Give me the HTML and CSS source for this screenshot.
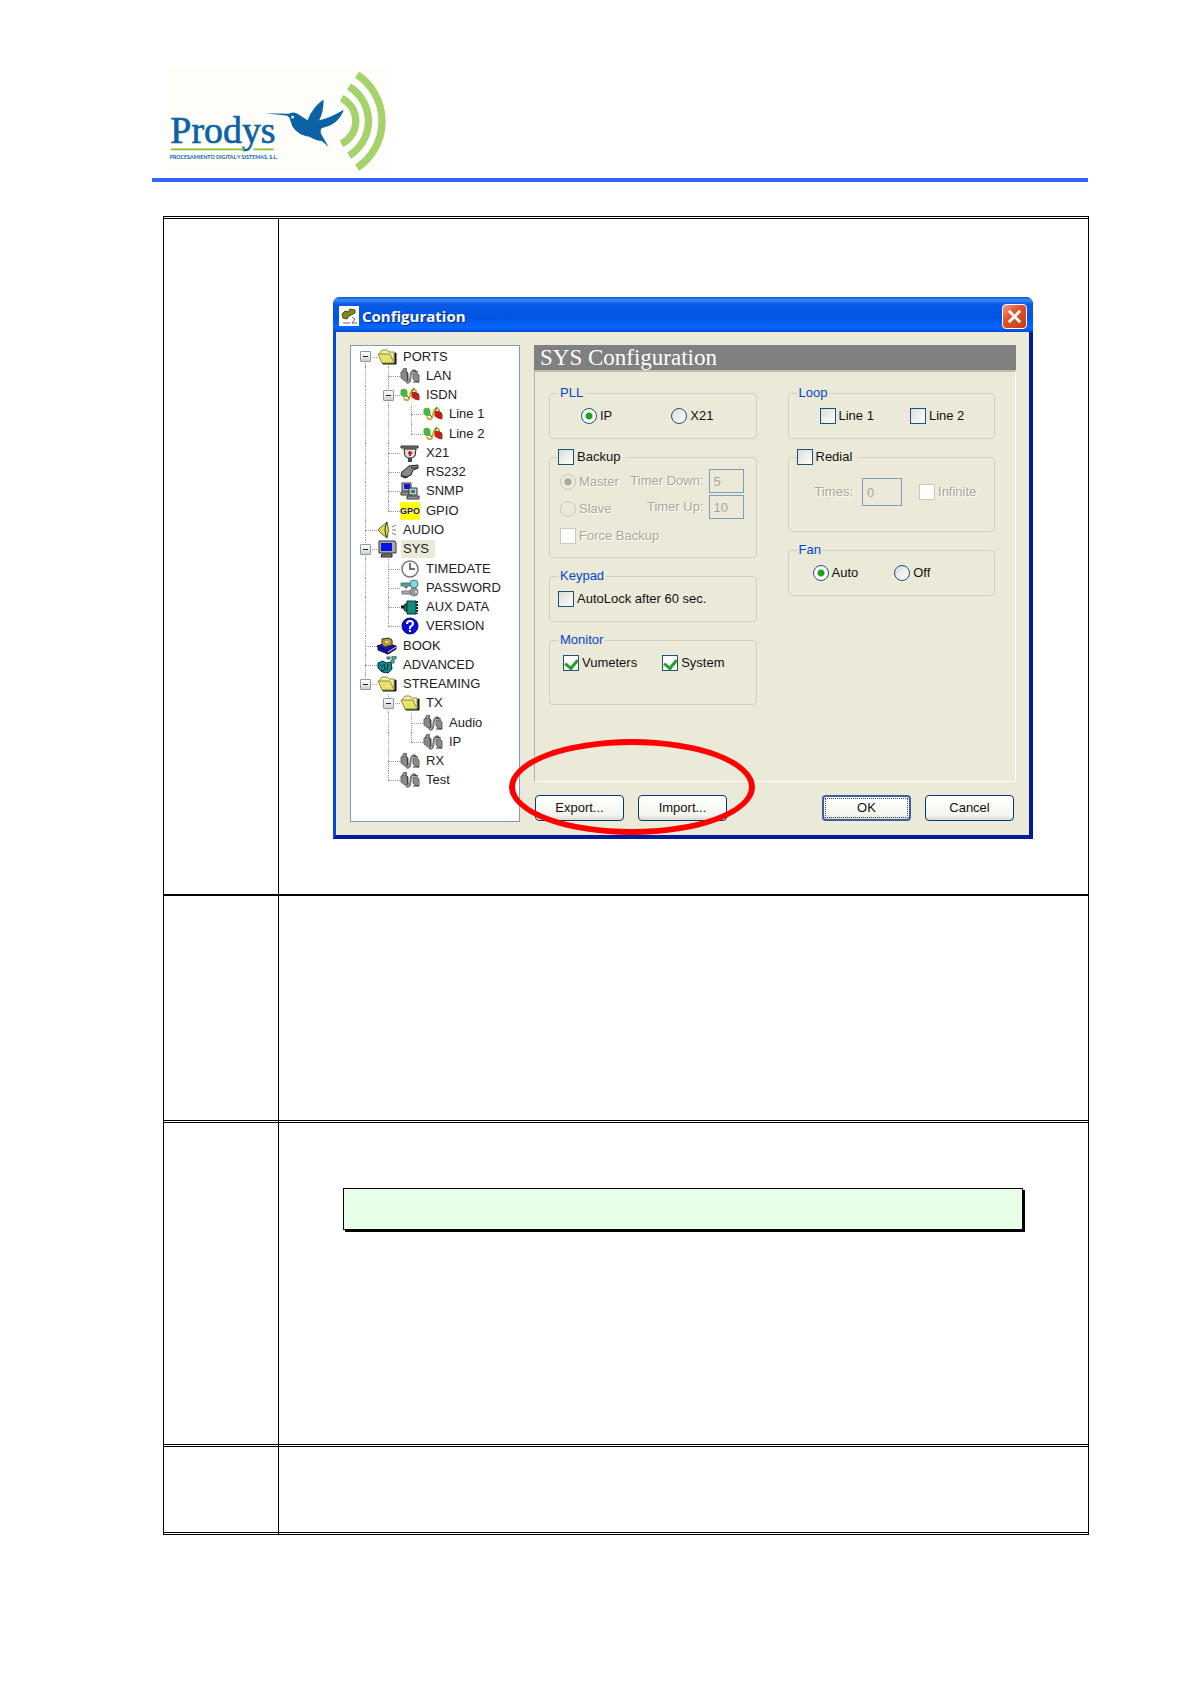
FILE: index.html
```html
<!DOCTYPE html>
<html lang="en">
<head>
    <meta charset="utf-8">
    <title>Prodys - SYS Configuration</title>
    <link rel="stylesheet" href="styles.css">
</head>
<body>
    <!-- shared icons -->
    <svg class="sprite" aria-hidden="true">
        <symbol id="folder" viewBox="0 0 20 18">
            <path d="M2 6l3-4h5l2 2h5v9" fill="#f4f0a0" stroke="#8c8c50"/>
            <path d="M5 15h13V5h1v11H6z" fill="#111" stroke="#111"/>
            <path d="M1 6h12l4 9H5z" fill="#e6e26c" stroke="#8c8c3c"/>
        </symbol>
        <symbol id="plug" viewBox="0 0 20 18">
            <path d="M3 5q0-4 3-3v4M6 13q1 5 4 1l1-8q3-5 5-1" fill="none" stroke="#777" stroke-width="2"/>
            <path d="M1 5l5-1 2 2v7l-3 1-4-3zM13 6h4l2 2v7l-4-1-2-2z" fill="#8a8a8a" stroke="#666"/>
            <path d="M7 5l1 9M13 4l5 1M13 15h6" stroke="#333" stroke-width="1"/>
        </symbol>
        <symbol id="isdn" viewBox="0 0 20 18">
            <path d="M4 12q2 4 5 1l2-7q3-5 5-1v6" fill="none" stroke="#c8b428" stroke-width="2"/>
            <path d="M1 4l4-1 2 2v5l-3 1-3-2z" fill="#36c136" stroke="#7c9c5c"/>
            <path d="M12 6l5 1 2 2v5l-4-1-3-2z" fill="#dc1414" stroke="#8c3030"/>
            <path d="M7 10l2 2M12 5l2-3M18 7v3" stroke="#444"/>
        </symbol>
        <symbol id="x21" viewBox="0 0 20 18">
            <path d="M1 2h17v2H1z" fill="#999" stroke="#222"/>
            <path d="M4 5h12l-1 7-3 2H8l-3-2z" fill="#ddd" stroke="#222"/>
            <path d="M10 7v5M8 9h4" stroke="#e01414" stroke-width="2"/>
            <path d="M8 14h4v4H8z" fill="#444"/>
        </symbol>
        <symbol id="rs232" viewBox="0 0 20 18">
            <path d="M9 3l9-1v3l-5 2-2 5-6 3-4-2 1-4z" fill="#888" stroke="#222"/>
            <path d="M11 5h7M2 13l6 1" stroke="#222"/>
        </symbol>
        <symbol id="snmp" viewBox="0 0 20 18">
            <path d="M2 1h9v8H2z" fill="#bbb" stroke="#333"/>
            <path d="M4 2h6v5H4z" fill="#1414dc"/>
            <path d="M1 10h11v3H1z" fill="#999" stroke="#333"/>
            <path d="M9 6h8v7H9z" fill="#ccc" stroke="#333"/>
            <path d="M11 8h4v3h-4z" fill="#0c8c7c"/>
            <path d="M7 14h12v3H7z" fill="#999" stroke="#333"/>
        </symbol>
        <symbol id="audio" viewBox="0 0 20 18">
            <path d="M1 9l3-3 6-5q3 8 0 16l-6-5z" fill="#dede50" stroke="#66661c"/>
            <path d="M10 1q-4 8 0 16" fill="none" stroke="#333"/>
            <path d="M15 6l4-2M15 9h4M15 12l4 2" stroke="#777"/>
        </symbol>
        <symbol id="screen" viewBox="0 0 20 18">
            <path d="M2 1h16l1 2v10H2z" fill="#aaa" stroke="#333"/>
            <path d="M4 3h11v8H4z" fill="#0a14e6"/>
            <path d="M5 14h10v3H4z" fill="#777" stroke="#222"/>
        </symbol>
        <symbol id="clock" viewBox="0 0 20 18">
            <circle cx="10" cy="9" r="8" fill="#fff" stroke="#777" stroke-width="1.5"/>
            <path d="M10 3v6h5" fill="none" stroke="#444" stroke-width="1.5"/>
        </symbol>
        <symbol id="keys" viewBox="0 0 20 18">
            <path d="M1 4h10v3H7v2H5V7H1z" fill="#5c9c9c" stroke="#577"/>
            <circle cx="14" cy="5" r="4" fill="#7cdcdc" stroke="#578"/>
            <path d="M2 12h9v3H2z" fill="#aaa" stroke="#777"/>
            <circle cx="14" cy="13" r="4" fill="#999" stroke="#777"/>
            <circle cx="16" cy="13" r="1" fill="#fff"/>
        </symbol>
        <symbol id="aux" viewBox="0 0 20 18">
            <path d="M1 9h5" stroke="#111" stroke-width="3"/>
            <path d="M4 7l3-2v9l-3-2z" fill="#0c7c6c" stroke="#222"/>
            <path d="M7 3h9v13H7z" fill="#148c7c" stroke="#033"/>
            <path d="M17 3v13" stroke="#222" stroke-width="2" stroke-dasharray="2 1"/>
        </symbol>
        <symbol id="help" viewBox="0 0 20 18">
            <circle cx="10" cy="9" r="8" fill="#0a0adc" stroke="#0a0a78"/>
            <path d="M7 7q0-3 3-3t3 3q0 1-3 3v2" fill="none" stroke="#fff" stroke-width="2"/>
            <path d="M9 13h2v2H9z" fill="#fff"/>
        </symbol>
        <symbol id="book" viewBox="0 0 20 18">
            <path d="M0 9l9-3 10 3-8 8z" fill="#1414b4" stroke="#0a0a50"/>
            <path d="M1 10l10 4 8-5v3l-8 5-10-4z" fill="#1414b4" stroke="#0a0a50"/>
            <path d="M11 15l8-5" stroke="#eee"/>
            <path d="M5 2l7-1 3 2v5l-7 2-3-2z" fill="#b49a2c" stroke="#332"/>
            <path d="M8 5h4" stroke="#ffe"/>
        </symbol>
        <symbol id="advanced" viewBox="0 0 20 18">
            <path d="M1 7l5-2 3 2 5-1 1 7-4 4-6-1-4-4z" fill="#0c8c8c" stroke="#033"/>
            <path d="M3 9l3 2M7 8l1 6M11 8l-1 6M4 14l3 1" stroke="#022"/>
            <path d="M10 1h3v2h-3zM15 0h4v3h-4zM14 4h3v3h-3z" fill="#5cbcac" stroke="#366"/>
        </symbol>
    </svg>

    <div class="page">
        <header class="header">
            <svg class="logo" viewBox="84 15 660 325" role="img" aria-label="Prodys">
                <rect x="84" y="15" width="654" height="325" fill="#fdfdf9"/>
                <text class="brand" x="90" y="250">Prodys</text>
                <path d="M92 269h221M340 269h61" stroke="#8cc224" stroke-width="5"/>
                <text class="tagline" x="88" y="297">PROCESAMIENTO DIGITAL Y SISTEMAS, S.L.</text>
                <path d="M375 160L447 162Q461 153 475 163L503 181Q518 142 551 119Q552 155 538 181Q568 176 612 150Q597 195 545 205Q538 214 548 230L566 261L546 244L534 242L520 237Q508 230 497 229Q458 217 451 181Q448 169 438 167Z" fill="#0b62a4"/>
                <circle cx="458" cy="172" r="4" fill="#fff"/>
                <g fill="none" stroke="#a6d26c" stroke-width="22">
                    <path d="M605 115A76 76 0 0 1 605 252"/>
                    <path d="M628 80A122 122 0 0 1 628 288"/>
                    <path d="M652 44A168 168 0 0 1 652 324"/>
                </g>
            </svg>
        </header>

        <table class="steps">
            <tr class="step-dialog">
                <td></td>
                <td>
                    <div class="dialog">
                        <div class="titlebar">
                            <svg class="app-icon" viewBox="0 0 20 20">
                                <path d="M0 0h20v20H0z" fill="#fff"/>
                                <path d="M3 8l3-3 3 1 2-3 5 1v3l-4 2-2 1-2 3-4-1z" fill="#7c8c1c" stroke="#45500c"/>
                                <path d="M13 11l3 2-3 4h5M4 17h7" fill="none" stroke="#666"/>
                            </svg>
                            <span class="title">Configuration</span>
                            <button class="close" type="button" aria-label="Close">
                                <svg viewBox="0 0 20 20"><path d="M4 4l12 12M16 4L4 16" stroke="#fff" stroke-width="3"/></svg>
                            </button>
                        </div>

                        <form class="dialog-body">
                            <ul class="tree">
                                <li><span class="g first"><button type="button" class="toggle" aria-label="Collapse"></button></span><svg><use href="#folder"/></svg><span class="name">PORTS</span></li>
                                <li><span class="g v"></span><span class="g e"></span><svg><use href="#plug"/></svg><span class="name">LAN</span></li>
                                <li><span class="g v"></span><span class="g e"><button type="button" class="toggle" aria-label="Collapse"></button></span><svg><use href="#isdn"/></svg><span class="name">ISDN</span></li>
                                <li><span class="g v"></span><span class="g v"></span><span class="g e"></span><svg><use href="#isdn"/></svg><span class="name">Line 1</span></li>
                                <li><span class="g v"></span><span class="g v"></span><span class="g c"></span><svg><use href="#isdn"/></svg><span class="name">Line 2</span></li>
                                <li><span class="g v"></span><span class="g e"></span><svg><use href="#x21"/></svg><span class="name">X21</span></li>
                                <li><span class="g v"></span><span class="g e"></span><svg><use href="#rs232"/></svg><span class="name">RS232</span></li>
                                <li><span class="g v"></span><span class="g e"></span><svg><use href="#snmp"/></svg><span class="name">SNMP</span></li>
                                <li><span class="g v"></span><span class="g c"></span><span class="gpo">GPO</span><span class="name">GPIO</span></li>
                                <li><span class="g e"></span><svg><use href="#audio"/></svg><span class="name">AUDIO</span></li>
                                <li><span class="g e"><button type="button" class="toggle" aria-label="Collapse"></button></span><svg><use href="#screen"/></svg><span class="name selected">SYS</span></li>
                                <li><span class="g v"></span><span class="g e"></span><svg><use href="#clock"/></svg><span class="name">TIMEDATE</span></li>
                                <li><span class="g v"></span><span class="g e"></span><svg><use href="#keys"/></svg><span class="name">PASSWORD</span></li>
                                <li><span class="g v"></span><span class="g e"></span><svg><use href="#aux"/></svg><span class="name">AUX DATA</span></li>
                                <li><span class="g v"></span><span class="g c"></span><svg><use href="#help"/></svg><span class="name">VERSION</span></li>
                                <li><span class="g e"></span><svg><use href="#book"/></svg><span class="name">BOOK</span></li>
                                <li><span class="g e"></span><svg><use href="#advanced"/></svg><span class="name">ADVANCED</span></li>
                                <li><span class="g c"><button type="button" class="toggle" aria-label="Collapse"></button></span><svg><use href="#folder"/></svg><span class="name">STREAMING</span></li>
                                <li><span class="g"></span><span class="g e"><button type="button" class="toggle" aria-label="Collapse"></button></span><svg><use href="#folder"/></svg><span class="name">TX</span></li>
                                <li><span class="g"></span><span class="g v"></span><span class="g e"></span><svg><use href="#plug"/></svg><span class="name">Audio</span></li>
                                <li><span class="g"></span><span class="g v"></span><span class="g c"></span><svg><use href="#plug"/></svg><span class="name">IP</span></li>
                                <li><span class="g"></span><span class="g e"></span><svg><use href="#plug"/></svg><span class="name">RX</span></li>
                                <li><span class="g"></span><span class="g c"></span><svg><use href="#plug"/></svg><span class="name">Test</span></li>
                            </ul>

                            <div class="content">
                                <h1>SYS Configuration</h1>
                                <div class="panel">
                                    <div class="column">
                                        <fieldset class="pll">
                                            <legend>PLL</legend>
                                            <label><input type="radio" name="pll" checked>IP</label>
                                            <label><input type="radio" name="pll">X21</label>
                                        </fieldset>
                                        <fieldset class="backup">
                                            <legend class="check"><label><input type="checkbox">Backup</label></legend>
                                            <div class="modes">
                                                <label><input type="radio" name="mode" checked disabled>Master</label>
                                                <label><input type="radio" name="mode" disabled>Slave</label>
                                                <label><input type="checkbox" disabled>Force Backup</label>
                                            </div>
                                            <div class="timers">
                                                <label>Timer Down:<input type="text" value="5" disabled></label>
                                                <label>Timer Up:<input type="text" value="10" disabled></label>
                                            </div>
                                        </fieldset>
                                        <fieldset class="keypad">
                                            <legend>Keypad</legend>
                                            <label><input type="checkbox">AutoLock after 60 sec.</label>
                                        </fieldset>
                                        <fieldset class="monitor">
                                            <legend>Monitor</legend>
                                            <label><input type="checkbox" checked>Vumeters</label>
                                            <label><input type="checkbox" checked>System</label>
                                        </fieldset>
                                    </div>
                                    <div class="column">
                                        <fieldset class="loop">
                                            <legend>Loop</legend>
                                            <label><input type="checkbox">Line 1</label>
                                            <label><input type="checkbox">Line 2</label>
                                        </fieldset>
                                        <fieldset class="redial">
                                            <legend class="check"><label><input type="checkbox">Redial</label></legend>
                                            <label>Times:<input type="text" value="0" disabled></label>
                                            <label><input type="checkbox" disabled>Infinite</label>
                                        </fieldset>
                                        <fieldset class="fan">
                                            <legend>Fan</legend>
                                            <label><input type="radio" name="fan" checked>Auto</label>
                                            <label><input type="radio" name="fan">Off</label>
                                        </fieldset>
                                    </div>
                                </div>
                                <div class="buttons">
                                    <button type="button">Export...</button>
                                    <button type="button">Import...</button>
                                    <button type="button" class="ok">OK</button>
                                    <button type="button">Cancel</button>
                                </div>
                            </div>
                        </form>
                        <div class="highlight"></div>
                    </div>
                </td>
            </tr>
            <tr class="step-blank"><td></td><td></td></tr>
            <tr class="step-note">
                <td></td>
                <td><div class="note"></div></td>
            </tr>
            <tr class="step-last"><td></td><td></td></tr>
        </table>
    </div>
</body>
</html>
```
FILE: styles.css
```css
* {
    box-sizing: border-box;
}
body {
    margin: 0;
    background: #fff;
    font-family: "Liberation Sans", Arial, sans-serif;
    font-size: 13px;
    line-height: 18px;
    color: #222;
}
.sprite {
    display: none;
}
.page {
    padding: 65px 102px 80px 152px;
}

/* header */
.header {
    height: 117px;
    padding-left: 16px;
    border-bottom: 4px solid #3366ff;
}
.logo {
    display: block;
    width: 220px;
    height: 108px;
}
.brand {
    font-family: "Liberation Serif", serif;
    font-size: 114px;
    fill: #0b62a4;
    stroke: #0b62a4;
    stroke-width: 2px;
}
.tagline {
    font-family: Lato, sans-serif;
    font-weight: bold;
    font-size: 16px;
    fill: #0b62a4;
}

/* steps table */
.steps {
    table-layout: fixed;
    width: calc(100% - 10px);
    margin: 34px -1px 0 11px;
    border-collapse: separate;
    border-spacing: 0;
    border: 1px solid #000;
    border-top: 3px double #000;
    border-bottom: 0;
}
.steps td {
    padding: 0;
    vertical-align: top;
    border-bottom: 3px double #000;
}
.steps td:first-child {
    width: 115px;
    border-right: 1px solid #000;
}
.steps .step-dialog td:last-child {
    padding: 78px 55px 55px 54px;
}
.steps .step-dialog td {
    border-bottom: 2px solid #000;
}
.step-blank td {
    height: 227px;
}
.step-note td {
    height: 324px;
}
.steps .step-note td:last-child {
    padding: 65px 65px 0 64px;
}
.step-last td {
    height: 88px;
}
.note {
    height: 42px;
    border: 1px solid #000;
    background: #e6ffe6;
    box-shadow: 2px 2px 0 #000;
}

/* dialog */
.dialog {
    position: relative;
    border: solid;
    border-color: #0a50e0 #001c9c #001c9c #0a46dc;
    border-width: 0 4px 4px 3px;
    border-radius: 7px 7px 0 0;
    background: #ebe9d8;
}
.titlebar {
    display: flex;
    align-items: center;
    height: 35px;
    margin: 0 -4px 0 -3px;
    padding: 3px 6px 0;
    border-radius: 7px 7px 0 0;
    background: linear-gradient(#0a50d8, #3c8cf8 8%, #0a5ae6 20%, #0054e3 60%, #0866ff 88%, #0046cc);
}
.app-icon {
    width: 20px;
    height: 20px;
}
.title {
    flex: 1;
    padding-left: 3px;
    font-family: "Open Sans", sans-serif;
    font-size: 15px;
    font-weight: bold;
    color: #fff;
    text-shadow: 1px 1px #0a2a8c;
}
.close {
    width: 25px;
    height: 25px;
    padding: 2px;
    border: 1px solid #fff;
    border-radius: 4px;
    background: linear-gradient(135deg, #f0a08c, #e0522c 40%, #c43c14);
}
.close svg {
    display: block;
}
.dialog-body {
    display: flex;
    gap: 14px;
    padding: 13px 13px 13px 14px;
}

/* tree */
.tree {
    display: flex;
    flex: none;
    flex-direction: column;
    width: 170px;
    margin: 0;
    padding: 1px 3px 31px;
    border: 1px solid #7f9db9;
    background: #fff;
    list-style: none;
}
.tree li {
    display: flex;
    flex: 1;
    align-items: center;
}
.tree svg {
    flex: none;
    width: 20px;
    height: 18px;
}
.name {
    margin-left: 4px;
    padding: 0 2px;
    white-space: nowrap;
}
.selected {
    padding-right: 6px;
    background: #ebe9d8;
}
.gpo {
    width: 20px;
    background: #ffff14;
    color: #14148c;
    font-size: 9px;
    font-weight: bold;
    text-align: center;
}
.g {
    position: relative;
    display: flex;
    flex: none;
    align-items: center;
    justify-content: center;
    align-self: stretch;
    width: 23px;
}
.g.v::before, .g.e::before, .g.c::before, .g.first::before {
    content: "";
    position: absolute;
    top: 0;
    bottom: 0;
    left: 11px;
    border-left: 1px dotted #999;
}
.g.c::before {
    bottom: 50%;
}
.g.first::before {
    top: 50%;
}
.g.e::after, .g.c::after, .g.first::after {
    content: "";
    position: absolute;
    top: 50%;
    left: 11px;
    right: 0;
    border-top: 1px dotted #999;
}
.toggle {
    position: relative;
    z-index: 1;
    width: 11px;
    height: 11px;
    padding: 0;
    border: 1px solid #7f9db9;
    border-radius: 1px;
    background: linear-gradient(#222, #222) center / 5px 1px no-repeat, linear-gradient(#fff, #d4d0c0);
}

/* right side */
.content {
    display: flex;
    flex: 1;
    flex-direction: column;
    min-width: 0;
}
h1 {
    height: 25px;
    margin: 0;
    padding-left: 6px;
    background: #808080;
    color: #fff;
    font-family: "Liberation Serif", serif;
    font-size: 23px;
    font-weight: normal;
    line-height: 25px;
}
.panel {
    display: grid;
    grid-template-columns: minmax(0, 1fr) minmax(0, 1fr);
    gap: 31px;
    height: 412px;
    padding: 12px 20px 0 14px;
    border: 1px solid;
    border-width: 2px 1px 1px 1px;
    border-color: #c0bdae #fff #fff #b4b1a2;
}
.column {
    display: flex;
    flex-direction: column;
    gap: 9px;
}
fieldset {
    display: flex;
    min-width: 0;
    height: 55px;
    margin: 0;
    padding: 5px 8px 0;
    border: 1px solid #d0d0bf;
    border-radius: 4px;
}
legend {
    height: 18px;
    padding: 0 2px;
    color: #0046d5;
}
legend.check {
    padding: 0 6px 0 0;
}
label {
    display: flex;
    align-items: center;
    height: 18px;
    gap: 3px;
    color: #111;
    white-space: nowrap;
}
.pll {
    gap: 59px;
}
.pll legend + label, .loop legend + label {
    margin-left: 23px;
}
.backup {
    justify-content: space-between;
    height: 110px;
    padding: 0 12px 0 8px;
}
/* narrow, so that the last label can run on under the timers */
.modes {
    display: flex;
    flex-direction: column;
    gap: 9px;
    width: 60px;
    padding: 7px 0 0 2px;
}
.timers {
    display: flex;
    flex-direction: column;
    align-items: flex-end;
    gap: 2px;
    padding-top: 3px;
}
.timers label {
    height: 24px;
    gap: 5px;
}
.monitor {
    height: 74px;
    gap: 25px;
}
.monitor legend + label {
    margin-left: 5px;
}
.loop {
    gap: 36px;
}
.redial {
    height: 84px;
    padding-top: 12px;
    gap: 17px;
}
.redial > label {
    height: 28px;
}
.redial legend + label {
    margin-left: 18px;
    gap: 9px;
}
.fan {
    gap: 36px;
}
.fan legend + label {
    margin-left: 16px;
}
label:has(input:disabled) {
    color: #aca899;
    text-shadow: 1px 1px #fff;
}

/* form controls */
input {
    margin: 0;
    font: inherit;
}
input[type="radio"], input[type="checkbox"] {
    flex: none;
    appearance: none;
    width: 16px;
    height: 16px;
    border: 1px solid #1c5180;
    background: linear-gradient(135deg, #dcdcd7, #fff);
}
input[type="radio"] {
    border-radius: 50%;
}
input[type="radio"]:checked {
    background: radial-gradient(circle, #21a121 3px, #fff 4px);
}
input[type="checkbox"]:checked {
    background: #fff;
}
input[type="checkbox"]:checked::before {
    content: "";
    display: block;
    width: 6px;
    height: 9px;
    margin: 1px auto;
    border: solid #21a121;
    border-width: 0 3px 3px 0;
    transform: rotate(40deg);
}
input[type="radio"]:disabled {
    border-color: #cac8bb;
    background: #ebe9d8;
}
input[type="radio"]:checked:disabled {
    background: radial-gradient(circle, #aca899 3px, #ebe9d8 4px);
}
input[type="checkbox"]:disabled {
    border-color: #cac8bb;
    background: #fff;
}
input[type="text"] {
    width: 35px;
    height: 24px;
    padding: 0 4px;
    border: 1px solid #7f9db9;
    background: #ebe9d8;
    color: #aca899;
}
.redial input[type="text"] {
    width: 40px;
    height: 28px;
}
.buttons {
    display: flex;
    gap: 14px;
    padding: 13px 2px 0 1px;
}
.buttons button {
    width: 89px;
    height: 26px;
    padding: 0;
    border: 1px solid #003c74;
    border-radius: 4px;
    background: linear-gradient(#fff, #f4f4ee 80%, #dcd8cc);
    color: #111;
    font: inherit;
}
.buttons .ok {
    margin-left: auto;
    border: 2px solid #3c5ca4;
    outline: 1px dotted #444;
    outline-offset: -4px;
}
.content {
    padding-bottom: 1px;
}

/* ring round the export / import buttons */
.highlight {
    position: absolute;
    left: 173px;
    bottom: 0;
    width: 246px;
    height: 96px;
    border: 6px solid #ff0000;
    border-radius: 50%;
    pointer-events: none;
}
```
